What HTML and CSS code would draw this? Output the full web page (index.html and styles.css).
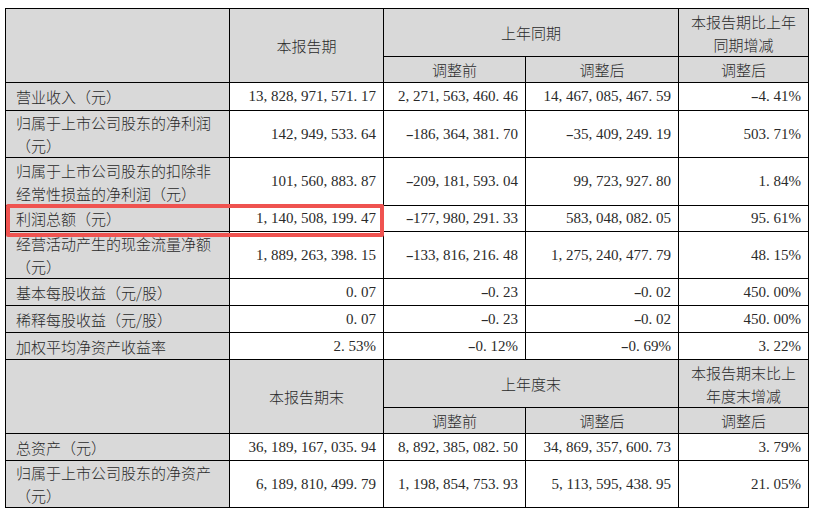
FILE: index.html
```html
<!DOCTYPE html>
<html lang="zh-CN">
<head>
<meta charset="utf-8">
<title>主要会计数据</title>
<link rel="stylesheet" href="styles.css">
</head>
<body>
<div class="sheet">
  <table class="report">
    <colgroup>
      <col class="c-label"><col class="c-cur"><col class="c-pre"><col class="c-post"><col class="c-chg">
    </colgroup>
    <tbody>
      <tr class="hd-top">
        <td class="head" rowspan="2"></td>
        <td class="head" rowspan="2">本报告期</td>
        <td class="head" colspan="2">上年同期</td>
        <td class="head">本报告期比上年同期增减</td>
      </tr>
      <tr class="hd-sub">
        <td class="head">调整前</td>
        <td class="head">调整后</td>
        <td class="head">调整后</td>
      </tr>
      <tr class="single tall">
        <td class="label">营业收入（元）</td>
        <td class="num">13<i>,</i>828<i>,</i>971<i>,</i>571<i>.</i>17</td>
        <td class="num">2<i>,</i>271<i>,</i>563<i>,</i>460<i>.</i>46</td>
        <td class="num">14<i>,</i>467<i>,</i>085<i>,</i>467<i>.</i>59</td>
        <td class="num"><i class="m">-</i>4<i>.</i>41%</td>
      </tr>
      <tr class="double">
        <td class="label">归属于上市公司股东的净利润（元）</td>
        <td class="num">142<i>,</i>949<i>,</i>533<i>.</i>64</td>
        <td class="num"><i class="m">-</i>186<i>,</i>364<i>,</i>381<i>.</i>70</td>
        <td class="num"><i class="m">-</i>35<i>,</i>409<i>,</i>249<i>.</i>19</td>
        <td class="num">503<i>.</i>71%</td>
      </tr>
      <tr class="double tall">
        <td class="label">归属于上市公司股东的扣除非经常性损益的净利润（元）</td>
        <td class="num">101<i>,</i>560<i>,</i>883<i>.</i>87</td>
        <td class="num"><i class="m">-</i>209<i>,</i>181<i>,</i>593<i>.</i>04</td>
        <td class="num">99<i>,</i>723<i>,</i>927<i>.</i>80</td>
        <td class="num">1<i>.</i>84%</td>
      </tr>
      <tr class="single short">
        <td class="label">利润总额（元）</td>
        <td class="num">1<i>,</i>140<i>,</i>508<i>,</i>199<i>.</i>47</td>
        <td class="num"><i class="m">-</i>177<i>,</i>980<i>,</i>291<i>.</i>33</td>
        <td class="num">583<i>,</i>048<i>,</i>082<i>.</i>05</td>
        <td class="num">95<i>.</i>61%</td>
      </tr>
      <tr class="double">
        <td class="label">经营活动产生的现金流量净额（元）</td>
        <td class="num">1<i>,</i>889<i>,</i>263<i>,</i>398<i>.</i>15</td>
        <td class="num"><i class="m">-</i>133<i>,</i>816<i>,</i>216<i>.</i>48</td>
        <td class="num">1<i>,</i>275<i>,</i>240<i>,</i>477<i>.</i>79</td>
        <td class="num">48<i>.</i>15%</td>
      </tr>
      <tr class="single">
        <td class="label">基本每股收益（元/股）</td>
        <td class="num">0<i>.</i>07</td>
        <td class="num"><i class="m">-</i>0<i>.</i>23</td>
        <td class="num"><i class="m">-</i>0<i>.</i>02</td>
        <td class="num">450<i>.</i>00%</td>
      </tr>
      <tr class="single">
        <td class="label">稀释每股收益（元/股）</td>
        <td class="num">0<i>.</i>07</td>
        <td class="num"><i class="m">-</i>0<i>.</i>23</td>
        <td class="num"><i class="m">-</i>0<i>.</i>02</td>
        <td class="num">450<i>.</i>00%</td>
      </tr>
      <tr class="single">
        <td class="label">加权平均净资产收益率</td>
        <td class="num">2<i>.</i>53%</td>
        <td class="num"><i class="m">-</i>0<i>.</i>12%</td>
        <td class="num"><i class="m">-</i>0<i>.</i>69%</td>
        <td class="num">3<i>.</i>22%</td>
      </tr>
      <tr class="hd-top">
        <td class="head" rowspan="2"></td>
        <td class="head" rowspan="2">本报告期末</td>
        <td class="head" colspan="2">上年度末</td>
        <td class="head">本报告期末比上年度末增减</td>
      </tr>
      <tr class="hd-sub">
        <td class="head">调整前</td>
        <td class="head">调整后</td>
        <td class="head">调整后</td>
      </tr>
      <tr class="single">
        <td class="label">总资产（元）</td>
        <td class="num">36<i>,</i>189<i>,</i>167<i>,</i>035<i>.</i>94</td>
        <td class="num">8<i>,</i>892<i>,</i>385<i>,</i>082<i>.</i>50</td>
        <td class="num">34<i>,</i>869<i>,</i>357<i>,</i>600<i>.</i>73</td>
        <td class="num">3<i>.</i>79%</td>
      </tr>
      <tr class="double">
        <td class="label">归属于上市公司股东的净资产（元）</td>
        <td class="num">6<i>,</i>189<i>,</i>810<i>,</i>499<i>.</i>79</td>
        <td class="num">1<i>,</i>198<i>,</i>854<i>,</i>753<i>.</i>93</td>
        <td class="num">5<i>,</i>113<i>,</i>595<i>,</i>438<i>.</i>95</td>
        <td class="num">21<i>.</i>05%</td>
      </tr>
    </tbody>
  </table>
  <div class="highlight"></div>
</div>
</body>
</html>
```
FILE: styles.css
```css
body {
  margin: 0;
  background: #fff;
  color: #2a2a2a;
  font-family: "Noto Sans CJK SC", sans-serif;
}

.sheet {
  position: relative;
  padding: 8px 0 0 5px;
}

.report {
  border-collapse: collapse;
  table-layout: fixed;
  width: 804px;
  font-size: 15px;
  line-height: 23px;
  font-weight: 300;
}

.c-label { width: 224px; }
.c-cur { width: 154px; }
.c-pre { width: 142px; }
.c-post { width: 153px; }
.c-chg { width: 130px; }

.report td {
  border: 1px solid #000;
  padding: 0 7px 0 10px;
  vertical-align: middle;
  overflow: hidden;
}

.report td.head {
  background: #d9d9d9;
  text-align: center;
  padding: 0 8px;
}

.report td.label {
  background: #d9d9d9;
  text-align: left;
}

.report td.num {
  text-align: right;
  font-family: "Liberation Serif", serif;
  font-weight: 400;
  white-space: nowrap;
}

.num i {
  display: inline-block;
  width: 0.5em;
  font-style: normal;
  text-align: left;
}

.num i.m {
  text-align: center;
  transform: scaleX(1.6);
}

.hd-top { height: 48px; }
.hd-sub { height: 26px; }
.single { height: 27px; }
.single.tall { height: 28px; }
.single.short { height: 26px; }
.double { height: 47px; }
.double.tall { height: 48px; }

.highlight {
  position: absolute;
  left: 6px;
  top: 204px;
  width: 378px;
  height: 33px;
  box-sizing: border-box;
  border: 4px solid #ef5350;
  border-radius: 2px;
  pointer-events: none;
}
```
